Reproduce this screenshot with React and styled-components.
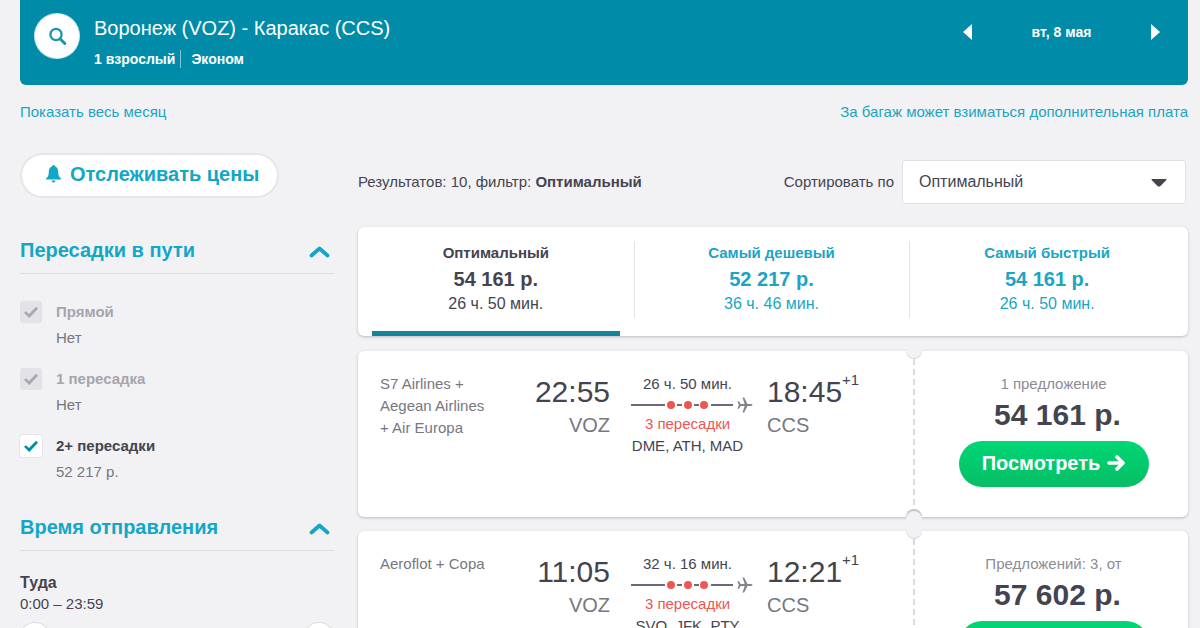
import React, { useState } from "react";
import styled, { createGlobalStyle } from "styled-components";

const teal = "#008ca8";
const link = "#1ba4c4";
const cyan = "#12a7c8";
const ink = "#444450";
const page = "#f2f2f4";

const GlobalStyle = createGlobalStyle`
  *, *::before, *::after { box-sizing: border-box; }
  body {
    margin: 0;
    background: ${page};
    color: ${ink};
    font: 15px/22px "Liberation Sans", Arial, sans-serif;
  }
  button, select, input { font: inherit; color: inherit; margin: 0; }
  a { text-decoration: none; }
  h1, h2, h3, p { margin: 0; }
`;

const Page = styled.div`
  height: 100vh;
  overflow: hidden;
  padding: 0 12px 0 20px;
`;

const Header = styled.header`
  display: flex;
  align-items: flex-start;
  height: 85px;
  padding: 14px 28px 0 15px;
  border-radius: 0 0 6px 6px;
  background: ${teal};
  color: #fff;
`;

const SearchButton = styled.button`
  display: grid;
  place-items: center;
  width: 44px;
  height: 44px;
  margin-right: 15px;
  padding: 0;
  border: 0;
  border-radius: 50%;
  background: #fff;
  box-shadow: 0 0 0 1px #c9e6f1;
  cursor: pointer;
`;

const Trip = styled.div`
  flex: 1;
`;

const Title = styled.h1`
  font-size: 20px;
  font-weight: 400;
  line-height: 28px;
`;

const TripMeta = styled.div`
  display: flex;
  align-items: center;
  margin-top: 8px;
  font-weight: 700;
  font-size: 14px;
`;

const MetaItem = styled.span`
  line-height: 18px;
  & + & {
    margin-left: 5px;
    padding-left: 10px;
    border-left: 1px solid #7fc5d3;
  }
`;

const DateNav = styled.nav`
  display: flex;
  align-items: center;
  justify-content: space-between;
  width: 197px;
  margin-top: 7px;
  font-size: 14px;
  font-weight: 700;
`;

const ArrowButton = styled.button`
  display: flex;
  padding: 0;
  border: 0;
  background: none;
  cursor: pointer;
`;

const LinksRow = styled.div`
  display: flex;
  justify-content: space-between;
  padding-top: 16px;
`;

const TextLink = styled.a`
  color: ${link};
`;

const Columns = styled.div`
  display: grid;
  grid-template-columns: 314px minmax(0, 1fr);
  column-gap: 24px;
  margin-top: 32px;
`;

const TrackButton = styled.button`
  display: flex;
  align-items: center;
  height: 41px;
  margin: 0 2px;
  padding: 0 18px 3px 23px;
  border: 0;
  border-radius: 21px;
  background: #fff;
  box-shadow: 0 0 0 2px #e6e6e9;
  color: ${cyan};
  font-size: 20px;
  font-weight: 700;
  cursor: pointer;
  svg { margin-right: 8px; }
`;

const FilterHead = styled.h2`
  display: flex;
  align-items: center;
  justify-content: space-between;
  height: 47px;
  margin-top: ${(p) => p.$gap}px;
  padding: 0 4px 0 0;
  border-bottom: 1px solid #dcdce2;
  color: ${cyan};
  font-size: 20px;
`;

const Option = styled.label`
  display: grid;
  grid-template-columns: 22px 1fr;
  column-gap: 14px;
  height: 67px;
  line-height: 22px;
  font-weight: 700;
  color: ${(p) => (p.$off ? "#a5a5b0" : ink)};
  small {
    display: block;
    padding-top: 4px;
    font-size: 15px;
    font-weight: 400;
    color: #77777f;
  }
`;

const Check = styled.input`
  appearance: none;
  width: 22px;
  height: 22px;
  border-radius: 3px;
  background: #fff;
  box-shadow: 0 0 0 1px #e6e6ea;
  display: grid;
  place-items: center;
  &::before {
    content: "";
    width: 14px;
    height: 14px;
    background: ${teal};
    clip-path: polygon(0 56%, 14% 44%, 36% 64%, 86% 12%, 100% 26%, 38% 92%);
    opacity: 0;
  }
  &:checked::before { opacity: 1; }
  &:disabled { background: #e3e2e8; box-shadow: none; }
  &:disabled::before { background: #a9a8b2; }
`;

const Options = styled.div`
  padding-top: 27px;
`;

const TimeFilter = styled.div`
  padding-top: 21px;
  h3 { font-size: 16px; line-height: 22px; }
  p { line-height: 20px; }
`;

const DualRange = styled.div`
  display: grid;
  align-items: center;
  margin-top: 9px;
`;

const Range = styled.input`
  grid-area: 1 / 1;
  appearance: none;
  width: 100%;
  height: 30px;
  background: none;
  pointer-events: none;
  &::-webkit-slider-thumb {
    appearance: none;
    width: 30px;
    height: 30px;
    border-radius: 50%;
    background: #fff;
    box-shadow: 0 0 0 1px #dddde2;
    pointer-events: auto;
  }
  &::-webkit-slider-runnable-track { background: none; }
`;

const ResultsBar = styled.div`
  display: flex;
  align-items: center;
  height: 44px;
  margin-top: 5px;
  padding-right: 2px;
`;

const Summary = styled.p`
  flex: 1;
`;

const SelectBox = styled.div`
  display: grid;
  grid-template-columns: 1fr 16px;
  align-items: center;
  width: 284px;
  height: 44px;
  margin-left: 8px;
  padding-right: 18px;
  border: 1px solid #e2e2e6;
  border-radius: 3px;
  background: #fff;
  svg { grid-area: 1 / 2; pointer-events: none; }
`;

const Select = styled.select`
  grid-area: 1 / 1 / 2 / 3;
  appearance: none;
  height: 42px;
  margin-right: -18px;
  padding: 0 16px;
  border: 0;
  background: none;
  font-size: 16px;
`;

const card = `
  border-radius: 6px;
  background: #fff;
  box-shadow: 0 1px 3px rgba(60, 55, 80, 0.3);
`;

const Tabs = styled.div`
  display: grid;
  grid-template-columns: repeat(3, 1fr);
  margin-top: 23px;
  padding-right: 3px;
  height: 109px;
  ${card}
`;

const Tab = styled.button`
  display: flex;
  flex-direction: column;
  align-items: center;
  padding: 14px 14px 0;
  border: 0;
  background: none;
  color: ${(p) => (p.$active ? ink : link)};
  cursor: pointer;
  &::after {
    content: "";
    width: 100%;
    height: 5px;
    margin-top: auto;
    background: ${(p) => (p.$active ? "#15839a" : "none")};
  }
  & + & {
    background: linear-gradient(#e4e4e8, #e4e4e8) 0 14px / 1px 77px no-repeat;
  }
`;

const TabName = styled.span`
  line-height: 24px;
  font-weight: 700;
`;

const TabPrice = styled.span`
  line-height: 28px;
  font-size: 20px;
  font-weight: 700;
`;

const TabTime = styled.span`
  font-size: 16px;
  line-height: 22px;
`;

const Tickets = styled.div`
  display: grid;
  gap: 14px;
  margin-top: 15px;
`;

const Ticket = styled.article`
  display: grid;
  grid-template-columns: minmax(0, 1fr) 275px;
  height: 166px;
  ${card}
`;

const Flight = styled.div`
  display: grid;
  grid-template-columns: 110px 120px 122px 1fr;
  padding: 22px 0 0 22px;
`;

const Airlines = styled.p`
  color: #777780;
`;

const Stop = styled.div`
  text-align: ${(p) => p.$align};
  padding-top: 1px;
`;

const Time = styled.div`
  display: inline-flex;
  font-size: 30px;
  line-height: 36px;
  sup {
    font-size: 15px;
    line-height: 12px;
  }
`;

const Airport = styled.div`
  margin-top: 3px;
  font-size: 20px;
  line-height: 24px;
  color: #777780;
`;

const Route = styled.div`
  display: flex;
  flex-direction: column;
  margin: 0 -15px 0 21px;
  width: 122px;
`;

const RouteText = styled.span`
  width: 113px;
  text-align: center;
  white-space: nowrap;
  color: ${(p) => (p.$alert ? "#ee5555" : "inherit")};
`;

const Arrival = styled(Stop)`
  padding-left: 35px;
`;

const Offer = styled.div`
  position: relative;
  display: flex;
  flex-direction: column;
  align-items: center;
  padding-top: 22px;
  padding-left: 6px;
  background: repeating-linear-gradient(#d9d9de 0 6px, transparent 6px 10px) 0 8px / 2px 150px no-repeat;
  &::before, &::after {
    content: "";
    position: absolute;
    left: -7px;
    width: 16px;
    height: 10px;
    background: ${page};
  }
  &::before {
    top: -2px;
    border-radius: 0 0 8px 8px;
    box-shadow: inset 0 -1px 1px #d8d8dd;
  }
  &::after {
    bottom: -4px;
    height: 12px;
    border-radius: 8px 8px 0 0;
    box-shadow: inset 0 2px 1px #c2c2c8;
  }
`;

const OfferCount = styled.span`
  color: #8c8c95;
`;

const Price = styled.strong`
  padding-left: 8px;
  font-size: 30px;
  line-height: 40px;
`;

const ViewButton = styled.button`
  display: flex;
  align-items: center;
  justify-content: center;
  gap: 7px;
  width: 190px;
  height: 46px;
  margin-top: 6px;
  padding: 0 0 3px;
  border: 0;
  border-radius: 23px;
  background: linear-gradient(#00d775, #06bd65);
  color: #fff;
  font-size: 20px;
  font-weight: 700;
  cursor: pointer;
`;

const Chevron = () => (
  <svg width="21" height="15" viewBox="0 0 21 15" fill="none" stroke={cyan} strokeWidth="3.8" strokeLinecap="round" strokeLinejoin="round">
    <path d="M2.500 12.500 10.500 5.500l8 7" />
  </svg>
);

const RouteLine = () => (
  <svg width="122" height="18" viewBox="0 0 122 18" aria-hidden="true">
    <g stroke="#6c6a7a" strokeWidth="2">
      <path d="M0 10h34M46 10h5M63 10h5M80 10h22" />
    </g>
    <g fill="#ee5555">
      <circle cx="40" cy="10" r="4" />
      <circle cx="57" cy="10" r="4" />
      <circle cx="73" cy="10" r="4" />
    </g>
    <g fill="#84838d">
      <path d="M109 9.100h10.500c1.200 0 2 .4 2 .9s-.8.9-2 .9H109z" />
      <path d="M111.500 2.500h1.700L117 10l-3.800 7.500h-1.700L114 10z" />
      <path d="M106.400 6.200h1.600l2.300 3.800-2.300 3.800h-1.600l1.500-3.800z" />
    </g>
  </svg>
);

const tabs = [
  ["Оптимальный", "54 161 р.", "26 ч. 50 мин."],
  ["Самый дешевый", "52 217 р.", "36 ч. 46 мин."],
  ["Самый быстрый", "54 161 р.", "26 ч. 50 мин."],
];

const stops = [
  { name: "Прямой", note: "Нет", off: true },
  { name: "1 пересадка", note: "Нет", off: true },
  { name: "2+ пересадки", note: "52 217 р.", off: false },
];

const tickets = [
  { airlines: "S7 Airlines + Aegean Airlines + Air Europa", dep: "22:55", arr: "18:45", time: "26 ч. 50 мин.", via: "DME, ATH, MAD", offers: "1 предложение", price: "54 161 р." },
  { airlines: "Aeroflot + Copa", dep: "11:05", arr: "12:21", time: "32 ч. 16 мин.", via: "SVO, JFK, PTY", offers: "Предложений: 3, от", price: "57 602 р." },
];

export default function App() {
  const [active, setActive] = useState(0);
  return (
    <Page>
      <GlobalStyle />
      <Header>
        <SearchButton aria-label="Поиск">
          <svg width="20" height="20" viewBox="0 0 20 20" fill="none" stroke="#1e93ad" strokeLinecap="round">
            <circle cx="9" cy="8.500" r="5.600" strokeWidth="2.300" />
            <path d="m13.500 13.200 4.300 4.300" strokeWidth="3" />
          </svg>
        </SearchButton>
        <Trip>
          <Title>Воронеж (VOZ) - Каракас (CCS)</Title>
          <TripMeta>
            <MetaItem>1 взрослый</MetaItem>
            <MetaItem>Эконом</MetaItem>
          </TripMeta>
        </Trip>
        <DateNav aria-label="Дата">
          <ArrowButton aria-label="Предыдущий день">
            <svg width="9" height="16" viewBox="0 0 9 16" fill="#fff"><path d="M9 0v16L0 8z" /></svg>
          </ArrowButton>
          <span>вт, 8 мая</span>
          <ArrowButton aria-label="Следующий день">
            <svg width="9" height="16" viewBox="0 0 9 16" fill="#fff"><path d="M0 0v16l9-8z" /></svg>
          </ArrowButton>
        </DateNav>
      </Header>
      <LinksRow>
        <TextLink href="#month">Показать весь месяц</TextLink>
        <TextLink href="#baggage">За багаж может взиматься дополнительная плата</TextLink>
      </LinksRow>
      <Columns>
        <aside>
          <TrackButton>
            <svg width="17" height="18" viewBox="0 0 17 18" fill={cyan}>
              <path d="M8.5 0c.8 0 1.3.6 1.3 1.3C12 2 13.200 4 13.200 6.500c0 4 .8 5.500 2.800 7v1H1v-1c2-1.500 2.800-3 2.800-7C3.800 4 5 2 7.200 1.300 7.200.6 7.700 0 8.500 0zM6.500 15.500h4a2 2 0 0 1-4 0z" />
            </svg>
            Отслеживать цены
          </TrackButton>
          <FilterHead $gap={31}>Пересадки в пути<Chevron /></FilterHead>
          <Options>
            {stops.map((s) => (
              <Option key={s.name} $off={s.off}>
                <Check type="checkbox" defaultChecked disabled={s.off} />
                <span>{s.name}<small>{s.note}</small></span>
              </Option>
            ))}
          </Options>
          <FilterHead $gap={2}>Время отправления<Chevron /></FilterHead>
          <TimeFilter>
            <h3>Туда</h3>
            <p>0:00 – 23:59</p>
            <DualRange>
              <Range type="range" min="0" max="1439" defaultValue="0" aria-label="Вылет не раньше" />
              <Range type="range" min="0" max="1439" defaultValue="1439" aria-label="Вылет не позже" />
            </DualRange>
          </TimeFilter>
        </aside>
        <main>
          <ResultsBar>
            <Summary>Результатов: 10, фильтр: <b>Оптимальный</b></Summary>
            <label htmlFor="sort">Сортировать по</label>
            <SelectBox>
              <Select id="sort" defaultValue="best">
                <option value="best">Оптимальный</option>
                <option value="cheap">Самый дешевый</option>
                <option value="fast">Самый быстрый</option>
              </Select>
              <svg width="16" height="9" viewBox="0 0 16 9" fill={ink}><path d="M1 1h14q1 .3.400 1L9.500 8q-1.500 1-3 0L.6 2Q0 1.300 1 1z" /></svg>
            </SelectBox>
          </ResultsBar>
          <Tabs>
            {tabs.map(([name, price, time], i) => (
              <Tab key={name} $active={i === active} onClick={() => setActive(i)}>
                <TabName>{name}</TabName>
                <TabPrice>{price}</TabPrice>
                <TabTime>{time}</TabTime>
              </Tab>
            ))}
          </Tabs>
          <Tickets>
            {tickets.map((t) => (
              <Ticket key={t.dep}>
                <Flight>
                  <Airlines>{t.airlines}</Airlines>
                  <Stop $align="right">
                    <Time>{t.dep}</Time>
                    <Airport>VOZ</Airport>
                  </Stop>
                  <Route>
                    <RouteText>{t.time}</RouteText>
                    <RouteLine />
                    <RouteText $alert>3 пересадки</RouteText>
                    <RouteText>{t.via}</RouteText>
                  </Route>
                  <Arrival $align="left">
                    <Time>{t.arr}<sup>+1</sup></Time>
                    <Airport>CCS</Airport>
                  </Arrival>
                </Flight>
                <Offer>
                  <OfferCount>{t.offers}</OfferCount>
                  <Price>{t.price}</Price>
                  <ViewButton>
                    Посмотреть
                    <svg width="18" height="16" viewBox="0 0 18 16" fill="none" stroke="#fff" strokeWidth="3.6" strokeLinecap="round" strokeLinejoin="round">
                      <path d="M2 8h14M10 2l6 6-6 6" />
                    </svg>
                  </ViewButton>
                </Offer>
              </Ticket>
            ))}
          </Tickets>
        </main>
      </Columns>
    </Page>
  );
}
